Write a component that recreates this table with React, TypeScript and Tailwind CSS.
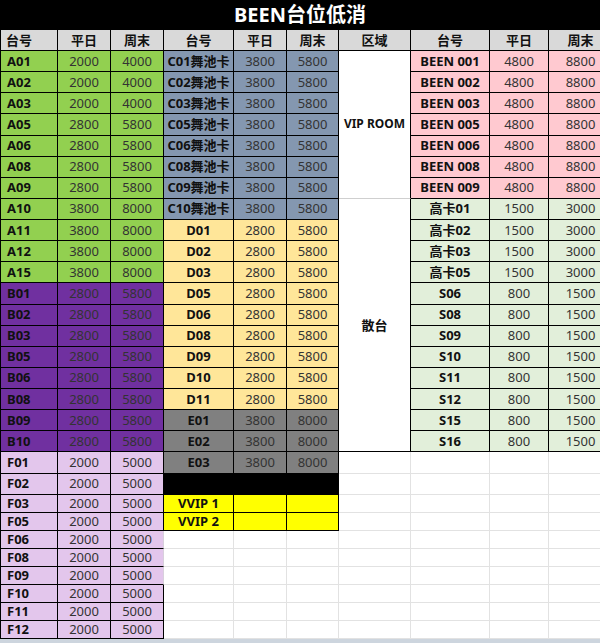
import { Fragment } from "react";

type Row = { id: string; wd: string; we: string; bg: string };

const make = (ids: string[], wd: string, we: string, bg: string): Row[] =>
  ids.map((id) => ({ id, wd, we, bg }));

const GREEN = "bg-[#92d050]";
const PURPLE = "bg-[#7030a0]";
const LAVENDER = "bg-[#e3c6ec]";
const STEEL = "bg-[#8497b0]";
const BEIGE = "bg-[#ffe699]";
const GREY = "bg-[#808080]";
const PINK = "bg-[#ffc9d0]";
const MINT = "bg-[#e2efda]";
const YELLOW = "bg-[#ffff00]";

const leftRows: Row[] = [
  ...make(["A01", "A02", "A03"], "2000", "4000", GREEN),
  ...make(["A05", "A06", "A08", "A09"], "2800", "5800", GREEN),
  ...make(["A10", "A11", "A12", "A15"], "3800", "8000", GREEN),
  ...make(["B01", "B02", "B03", "B05", "B06", "B08", "B09", "B10"], "2800", "5800", PURPLE),
  ...make(["F01", "F02", "F03", "F05", "F06", "F08", "F09", "F10", "F11", "F12"], "2000", "5000", LAVENDER),
];

const midRows: (Row | "black" | null)[] = [
  ...make(["C01", "C02", "C03", "C05", "C06", "C08", "C09", "C10"].map((c) => c + "舞池卡"), "3800", "5800", STEEL),
  ...make(["D01", "D02", "D03", "D05", "D06", "D08", "D09", "D10", "D11"], "2800", "5800", BEIGE),
  ...make(["E01", "E02", "E03"], "3800", "8000", GREY),
  "black",
  ...make(["VVIP 1", "VVIP 2"], "", "", YELLOW),
  null, null, null, null, null, null,
];

const rightRows: (Row | null)[] = [
  ...make(["BEEN 001", "BEEN 002", "BEEN 003", "BEEN 005", "BEEN 006", "BEEN 008", "BEEN 009"], "4800", "8800", PINK),
  ...make(["高卡01", "高卡02", "高卡03", "高卡05"], "1500", "3000", MINT),
  ...make(["S06", "S08", "S09", "S10", "S11", "S12", "S15", "S16"], "800", "1500", MINT),
  ...Array(10).fill(null),
];

// these three rows lost their right edge in the sheet
const noEdge = ["F06", "F08", "F09"];

const cell = "flex items-center border-r border-b border-black";
const empty = "border-r border-b border-[#e2e2e2] bg-white";
const num = "justify-center text-[#333]";

const headers = ["台号", "平日", "周末", "台号", "平日", "周末", "区域", "台号", "平日", "周末"];

export default function App() {
  return (
    <div className="w-[600px] h-[643px] overflow-hidden bg-white font-['Noto_Sans','Noto_Sans_CJK_SC',sans-serif] leading-none">
      <div className="h-[30px] bg-black border-b border-black flex items-center justify-center text-white text-[20px] font-bold">
        BEEN台位低消
      </div>
      <div className="grid w-[612px] grid-cols-[57px_53px_53px_70px_53px_52px_72px_79px_59px_64px] grid-rows-[21px_repeat(21,21.14px)_repeat(8,18px)] border-l border-black text-[13px]">
        {headers.map((h, i) => (
          <div
            key={"h" + i}
            className={`${cell} bg-[#d9d9d9] font-bold text-[#111] ${i === 0 ? "pl-[5px]" : "justify-center"}`}
          >
            {h}
          </div>
        ))}

        {leftRows.map((l, r) => {
          const m = midRows[r];
          const g = rightRows[r];
          return (
            <Fragment key={l.id}>
              <div className={`${cell} ${l.bg} pl-[6px] font-bold text-[#111]`}>{l.id}</div>
              <div className={`${cell} ${l.bg} ${num}`}>{l.wd}</div>
              <div
                className={`flex items-center justify-center border-b border-r border-black text-[#333] ${l.bg} ${
                  noEdge.includes(l.id) ? "border-r-[#d8d0dc]" : ""
                }`}
              >
                {l.we}
              </div>

              {m === "black" ? (
                <div className={`${cell} col-span-3 bg-black`} />
              ) : m ? (
                <>
                  <div className={`${cell} ${m.bg} justify-center font-bold text-[#111]`}>{m.id}</div>
                  <div className={`${cell} ${m.bg} ${num}`}>{m.wd}</div>
                  <div className={`${cell} ${m.bg} ${num}`}>{m.we}</div>
                </>
              ) : (
                <>
                  <div className={empty} />
                  <div className={empty} />
                  <div className={empty} />
                </>
              )}

              {r === 0 && (
                <div className="row-span-7 flex items-center justify-center border-r border-b border-r-black border-b-[#cfcfcf] bg-white text-[12px] font-bold text-[#111]">
                  VIP ROOM
                </div>
              )}
              {r === 7 && (
                <div className="row-span-12 flex items-center justify-center border-r border-b border-black bg-white font-bold text-[#111]">
                  散台
                </div>
              )}
              {r >= 19 && <div className={empty} />}

              {g ? (
                <>
                  <div className={`${cell} ${g.bg} justify-center font-bold text-[#111]`}>{g.id}</div>
                  <div className={`${cell} ${g.bg} ${num}`}>{g.wd}</div>
                  <div className={`${cell} ${g.bg} ${num}`}>{g.we}</div>
                </>
              ) : (
                <>
                  <div className={empty} />
                  <div className={empty} />
                  <div className={empty} />
                </>
              )}
            </Fragment>
          );
        })}
      </div>
      <div className="h-[4px] bg-[#cdd5de]" />
    </div>
  );
}
